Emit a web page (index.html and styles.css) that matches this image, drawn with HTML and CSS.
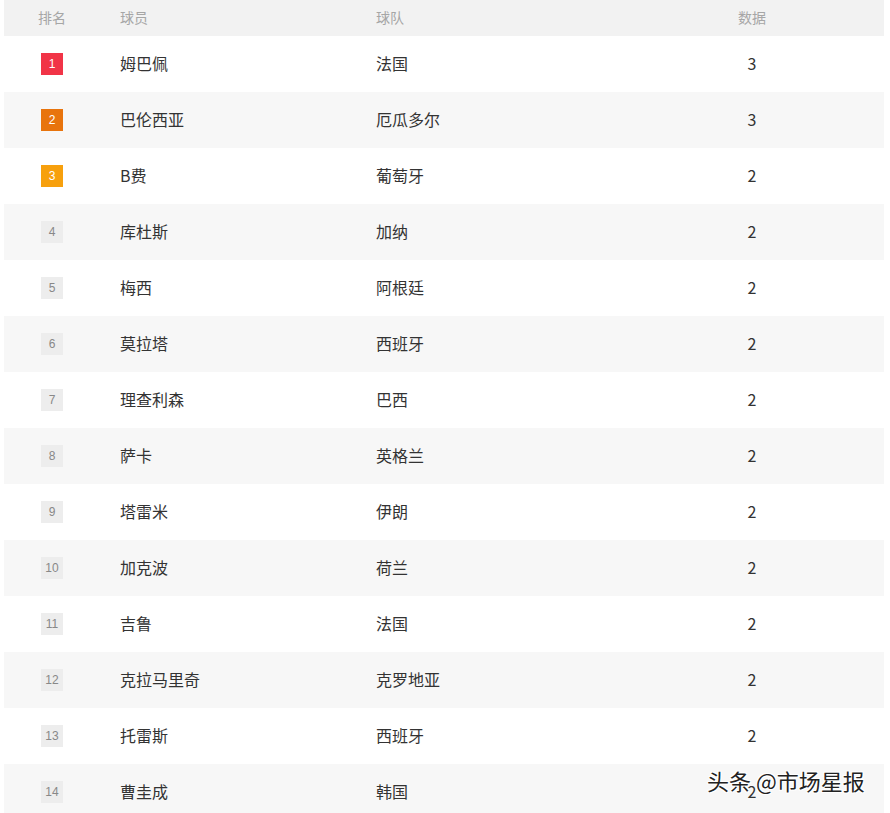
FILE: index.html
```html
<!DOCTYPE html>
<html lang="zh">
<head>
<meta charset="utf-8">
<link rel="stylesheet" href="styles.css">
</head>
<body>
<div class="board">
  <div class="row head">
    <div class="c rank">排名</div>
    <div class="c player">球员</div>
    <div class="c team">球队</div>
    <div class="c data">数据</div>
  </div>
  <div class="row"><div class="c rank"><span class="badge b1">1</span></div><div class="c player">姆巴佩</div><div class="c team">法国</div><div class="c data">3</div></div>
  <div class="row"><div class="c rank"><span class="badge b2">2</span></div><div class="c player">巴伦西亚</div><div class="c team">厄瓜多尔</div><div class="c data">3</div></div>
  <div class="row"><div class="c rank"><span class="badge b3">3</span></div><div class="c player">B费</div><div class="c team">葡萄牙</div><div class="c data">2</div></div>
  <div class="row"><div class="c rank"><span class="badge">4</span></div><div class="c player">库杜斯</div><div class="c team">加纳</div><div class="c data">2</div></div>
  <div class="row"><div class="c rank"><span class="badge">5</span></div><div class="c player">梅西</div><div class="c team">阿根廷</div><div class="c data">2</div></div>
  <div class="row"><div class="c rank"><span class="badge">6</span></div><div class="c player">莫拉塔</div><div class="c team">西班牙</div><div class="c data">2</div></div>
  <div class="row"><div class="c rank"><span class="badge">7</span></div><div class="c player">理查利森</div><div class="c team">巴西</div><div class="c data">2</div></div>
  <div class="row"><div class="c rank"><span class="badge">8</span></div><div class="c player">萨卡</div><div class="c team">英格兰</div><div class="c data">2</div></div>
  <div class="row"><div class="c rank"><span class="badge">9</span></div><div class="c player">塔雷米</div><div class="c team">伊朗</div><div class="c data">2</div></div>
  <div class="row"><div class="c rank"><span class="badge">10</span></div><div class="c player">加克波</div><div class="c team">荷兰</div><div class="c data">2</div></div>
  <div class="row"><div class="c rank"><span class="badge">11</span></div><div class="c player">吉鲁</div><div class="c team">法国</div><div class="c data">2</div></div>
  <div class="row"><div class="c rank"><span class="badge">12</span></div><div class="c player">克拉马里奇</div><div class="c team">克罗地亚</div><div class="c data">2</div></div>
  <div class="row"><div class="c rank"><span class="badge">13</span></div><div class="c player">托雷斯</div><div class="c team">西班牙</div><div class="c data">2</div></div>
  <div class="row"><div class="c rank"><span class="badge">14</span></div><div class="c player">曹圭成</div><div class="c team">韩国</div><div class="c data">2</div></div>
</div>
<div class="watermark">头条 @市场星报</div>
</body>
</html>
```
FILE: styles.css
```css
html, body {
  margin: 0;
  padding: 0;
  background: #fff;
  overflow: hidden;
}
body {
  font-family: "Noto Sans CJK SC", "Noto Sans", sans-serif;
  color: #333;
  position: relative;
  height: 813px;
}
.board {
  margin: 0 6px 0 4px;
  display: flex;
  flex-direction: column;
}
.row {
  box-sizing: border-box;
  display: grid;
  grid-template-columns: 96px 256px 264px 1fr;
  height: 56px;
  padding-bottom: 2px;
  align-items: center;
  font-size: 16px;
}
.row:nth-child(odd) { background: #f7f7f7; }
.row.head {
  height: 36px;
  background: #f2f2f2;
  color: #a6a6a6;
  font-size: 14px;
}
.c { line-height: 20px; }
.rank { text-align: center; }
.player, .team { padding-left: 20px; }
.data { text-align: center; }
.badge {
  display: inline-flex;
  align-items: center;
  justify-content: center;
  width: 22px;
  height: 22px;
  background: #ededed;
  color: #888;
  font-family: "Liberation Sans", Arial, sans-serif;
  font-size: 12px;
  vertical-align: middle;
}
.badge.b1 { background: #f13447; color: #fff; }
.badge.b2 { background: #e8740d; color: #fff; }
.badge.b3 { background: #f7a00d; color: #fff; }
.watermark {
  position: absolute;
  left: 707px;
  top: 764px;
  font-size: 22px;
  color: #222;
  text-shadow: 1px 1px 0 #fff, -1px -1px 0 #fff, 1px -1px 0 #fff, -1px 1px 0 #fff;
}
```
